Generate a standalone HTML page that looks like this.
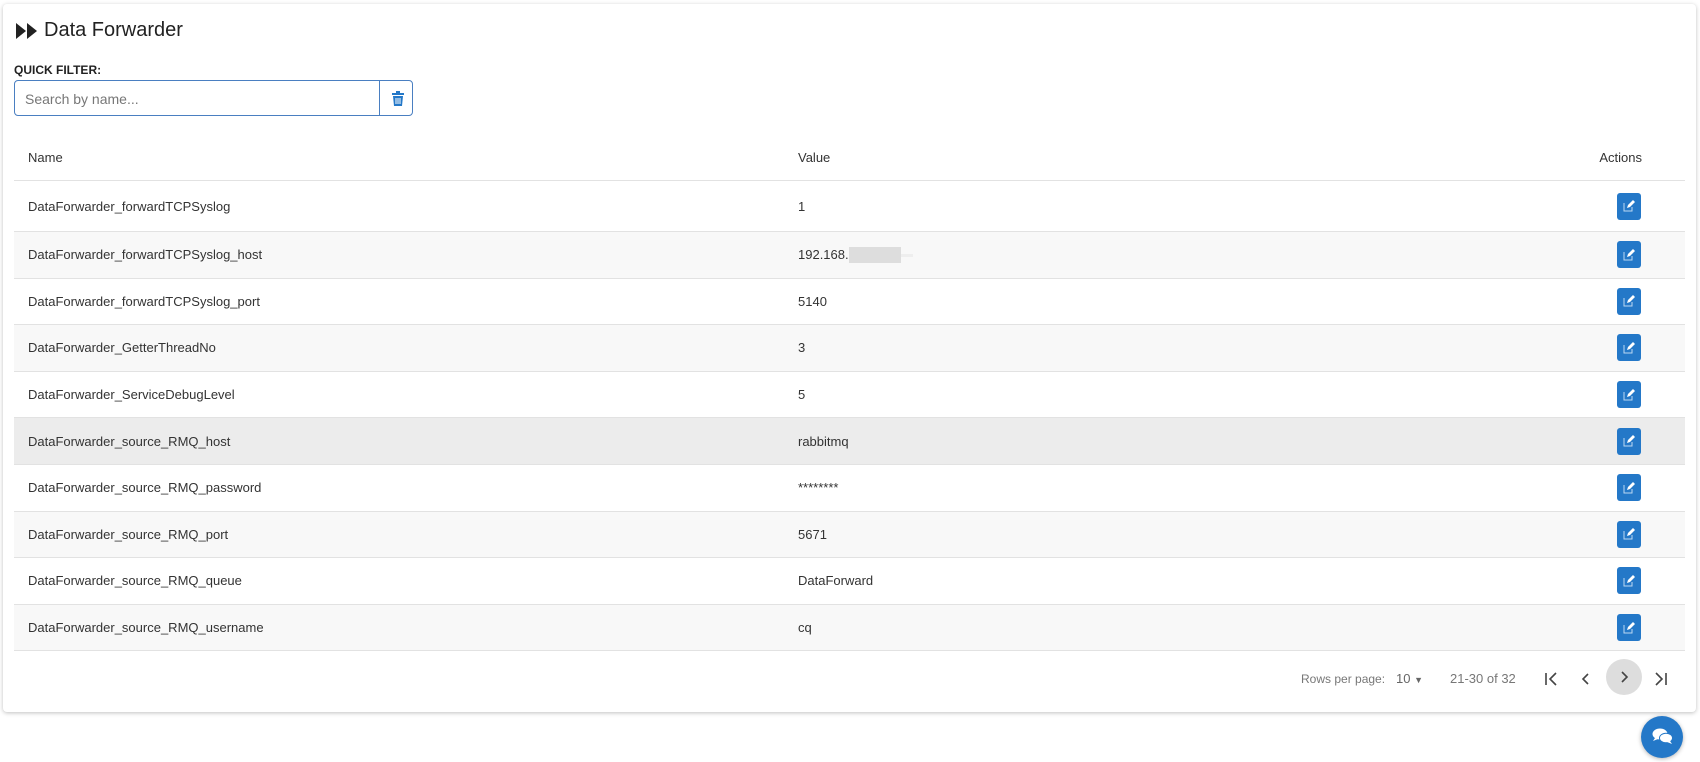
<!DOCTYPE html>
<html><head><style>
body{margin:0;width:1700px;height:762px;background:#fff;font-family:"Liberation Sans",sans-serif;overflow:hidden;position:relative}
.card{position:absolute;left:3px;top:4px;width:1693px;height:708px;background:#fff;border-radius:4px;box-shadow:0 1px 4px rgba(0,0,0,.25)}
.title{position:absolute;left:13px;top:15px;font-size:20px;color:#222;display:flex;align-items:center}
.qf{position:absolute;left:11px;top:59px;font-size:12px;font-weight:bold;color:#222}
.inp{position:absolute;left:11px;top:76px;width:399px;height:36px;border:1px solid #4a7fc1;border-radius:4px;box-sizing:border-box}
.inp span{position:absolute;left:10px;top:10px;font-size:14px;color:#777}
.inp .b{position:absolute;left:364px;top:0;width:1px;height:34px;background:#4a7fc1}
table{position:absolute;left:11px;top:130px;width:1671px;border-collapse:collapse;font-size:13px;color:#333}
td,th{padding:0 0 0 14px;text-align:left;font-weight:normal;border-bottom:1px solid #e2e2e2}
th{height:46px}
tr.r td{height:45.6px}
tr.r:nth-child(odd) td{background:#f8f8f8}
tr.h td{background:#ececec!important}
td.a{text-align:right;padding:0 44px 0 0}
.ed{width:24px;height:27px;background:#2478c8;border-radius:3px;margin-left:auto;display:flex;align-items:center;justify-content:center}
.pg{position:absolute;top:668px;font-size:12px;color:#777}
.chat{position:absolute;left:1641px;top:716px;width:42px;height:42px;border-radius:50%;background:#2478c8;box-shadow:0 1px 4px rgba(0,0,0,.3)}
</style></head><body>
<div class="card">
<div class="title"><svg width="22" height="16" viewBox="0 0 22 16"><path d="M0 0 L10 8 L0 16Z M11 0 L21 8 L11 16Z" fill="#222"/></svg><span style="margin-left:6px">Data Forwarder</span></div>
<div class="qf">QUICK FILTER:</div>
<div class="inp"><span>Search by name...</span><div class="b"></div>
<svg style="position:absolute;left:376px;top:10px" width="14" height="15" viewBox="0 0 14 15"><rect x="1" y="2" width="12" height="2" fill="#2478c8"/><rect x="5" y="0" width="4" height="2" fill="#2478c8"/><path d="M2 5h10l-1 10H3z" fill="#2478c8"/><path d="M5 7v6M7 7v6M9 7v6" stroke="#fff" stroke-width="1"/></svg></div>
<table>
<tr><th style="width:756px">Name</th><th>Value</th><th style="width:160px;text-align:right;padding:0 43px 0 0">Actions</th></tr>
<tr class="r"><td style="height:50px">DataForwarder_forwardTCPSyslog</td><td>1</td><td class="a"><div class="ed"><svg width="12" height="12" viewBox="0 0 12 12"><path d="M1 3v8h8V7" stroke="#bcd8f2" fill="none"/><path d="M4 8l1-3 5-5 2 2-5 5z" fill="#fff"/></svg></div></td></tr>
<tr class="r"><td>DataForwarder_forwardTCPSyslog_host</td><td>192.168.<span style="display:inline-block;width:52px;height:16px;background:#ddd;vertical-align:middle"></span><span style="display:inline-block;width:12px;height:3px;background:#eee;vertical-align:middle"></span></td><td class="a"><div class="ed"><svg width="12" height="12" viewBox="0 0 12 12"><path d="M1 3v8h8V7" stroke="#bcd8f2" fill="none"/><path d="M4 8l1-3 5-5 2 2-5 5z" fill="#fff"/></svg></div></td></tr>
<tr class="r"><td>DataForwarder_forwardTCPSyslog_port</td><td>5140</td><td class="a"><div class="ed"><svg width="12" height="12" viewBox="0 0 12 12"><path d="M1 3v8h8V7" stroke="#bcd8f2" fill="none"/><path d="M4 8l1-3 5-5 2 2-5 5z" fill="#fff"/></svg></div></td></tr>
<tr class="r"><td>DataForwarder_GetterThreadNo</td><td>3</td><td class="a"><div class="ed"><svg width="12" height="12" viewBox="0 0 12 12"><path d="M1 3v8h8V7" stroke="#bcd8f2" fill="none"/><path d="M4 8l1-3 5-5 2 2-5 5z" fill="#fff"/></svg></div></td></tr>
<tr class="r"><td>DataForwarder_ServiceDebugLevel</td><td>5</td><td class="a"><div class="ed"><svg width="12" height="12" viewBox="0 0 12 12"><path d="M1 3v8h8V7" stroke="#bcd8f2" fill="none"/><path d="M4 8l1-3 5-5 2 2-5 5z" fill="#fff"/></svg></div></td></tr>
<tr class="r h"><td>DataForwarder_source_RMQ_host</td><td>rabbitmq</td><td class="a"><div class="ed"><svg width="12" height="12" viewBox="0 0 12 12"><path d="M1 3v8h8V7" stroke="#bcd8f2" fill="none"/><path d="M4 8l1-3 5-5 2 2-5 5z" fill="#fff"/></svg></div></td></tr>
<tr class="r"><td>DataForwarder_source_RMQ_password</td><td>********</td><td class="a"><div class="ed"><svg width="12" height="12" viewBox="0 0 12 12"><path d="M1 3v8h8V7" stroke="#bcd8f2" fill="none"/><path d="M4 8l1-3 5-5 2 2-5 5z" fill="#fff"/></svg></div></td></tr>
<tr class="r"><td>DataForwarder_source_RMQ_port</td><td>5671</td><td class="a"><div class="ed"><svg width="12" height="12" viewBox="0 0 12 12"><path d="M1 3v8h8V7" stroke="#bcd8f2" fill="none"/><path d="M4 8l1-3 5-5 2 2-5 5z" fill="#fff"/></svg></div></td></tr>
<tr class="r"><td>DataForwarder_source_RMQ_queue</td><td>DataForward</td><td class="a"><div class="ed"><svg width="12" height="12" viewBox="0 0 12 12"><path d="M1 3v8h8V7" stroke="#bcd8f2" fill="none"/><path d="M4 8l1-3 5-5 2 2-5 5z" fill="#fff"/></svg></div></td></tr>
<tr class="r"><td>DataForwarder_source_RMQ_username</td><td>cq</td><td class="a"><div class="ed"><svg width="12" height="12" viewBox="0 0 12 12"><path d="M1 3v8h8V7" stroke="#bcd8f2" fill="none"/><path d="M4 8l1-3 5-5 2 2-5 5z" fill="#fff"/></svg></div></td></tr>
</table>
<div class="pg" style="left:1298px">Rows per page:</div>
<div class="pg" style="left:1393px;color:#666;font-size:13px;top:667px">10 <span style="font-size:9px">▼</span></div>
<div class="pg" style="left:1447px;font-size:13px;top:667px">21-30 of 32</div>
<svg style="position:absolute;left:1541px;top:663px" width="130" height="24" viewBox="0 0 130 24"><path d="M2 6v12M12 6l-6 6 6 6" stroke="#444" stroke-width="1.6" fill="none"/><path d="M44 7l-5 5 5 5" stroke="#444" stroke-width="1.6" fill="none"/><path d="M122 6v12M112 6l6 6-6 6" stroke="#444" stroke-width="1.6" fill="none"/></svg>
<div style="position:absolute;left:1603px;top:655px;width:36px;height:36px;border-radius:50%;background:#ddd"></div>
<svg style="position:absolute;left:1613px;top:665px" width="16" height="16"><path d="M6 3l5 5-5 5" stroke="#444" stroke-width="1.6" fill="none"/></svg>
</div>
<div class="chat"><svg style="position:absolute;left:11px;top:12px" width="21" height="17" viewBox="0 0 21 17"><ellipse cx="8" cy="6" rx="7.5" ry="5.5" fill="#fff"/><path d="M3 10l-2 3 5-2z" fill="#fff"/><ellipse cx="14" cy="10" rx="6.5" ry="4.8" fill="#fff" stroke="#2478c8" stroke-width="1"/><path d="M18 13l2 3-5-2z" fill="#fff"/></svg></div>
</body></html>
